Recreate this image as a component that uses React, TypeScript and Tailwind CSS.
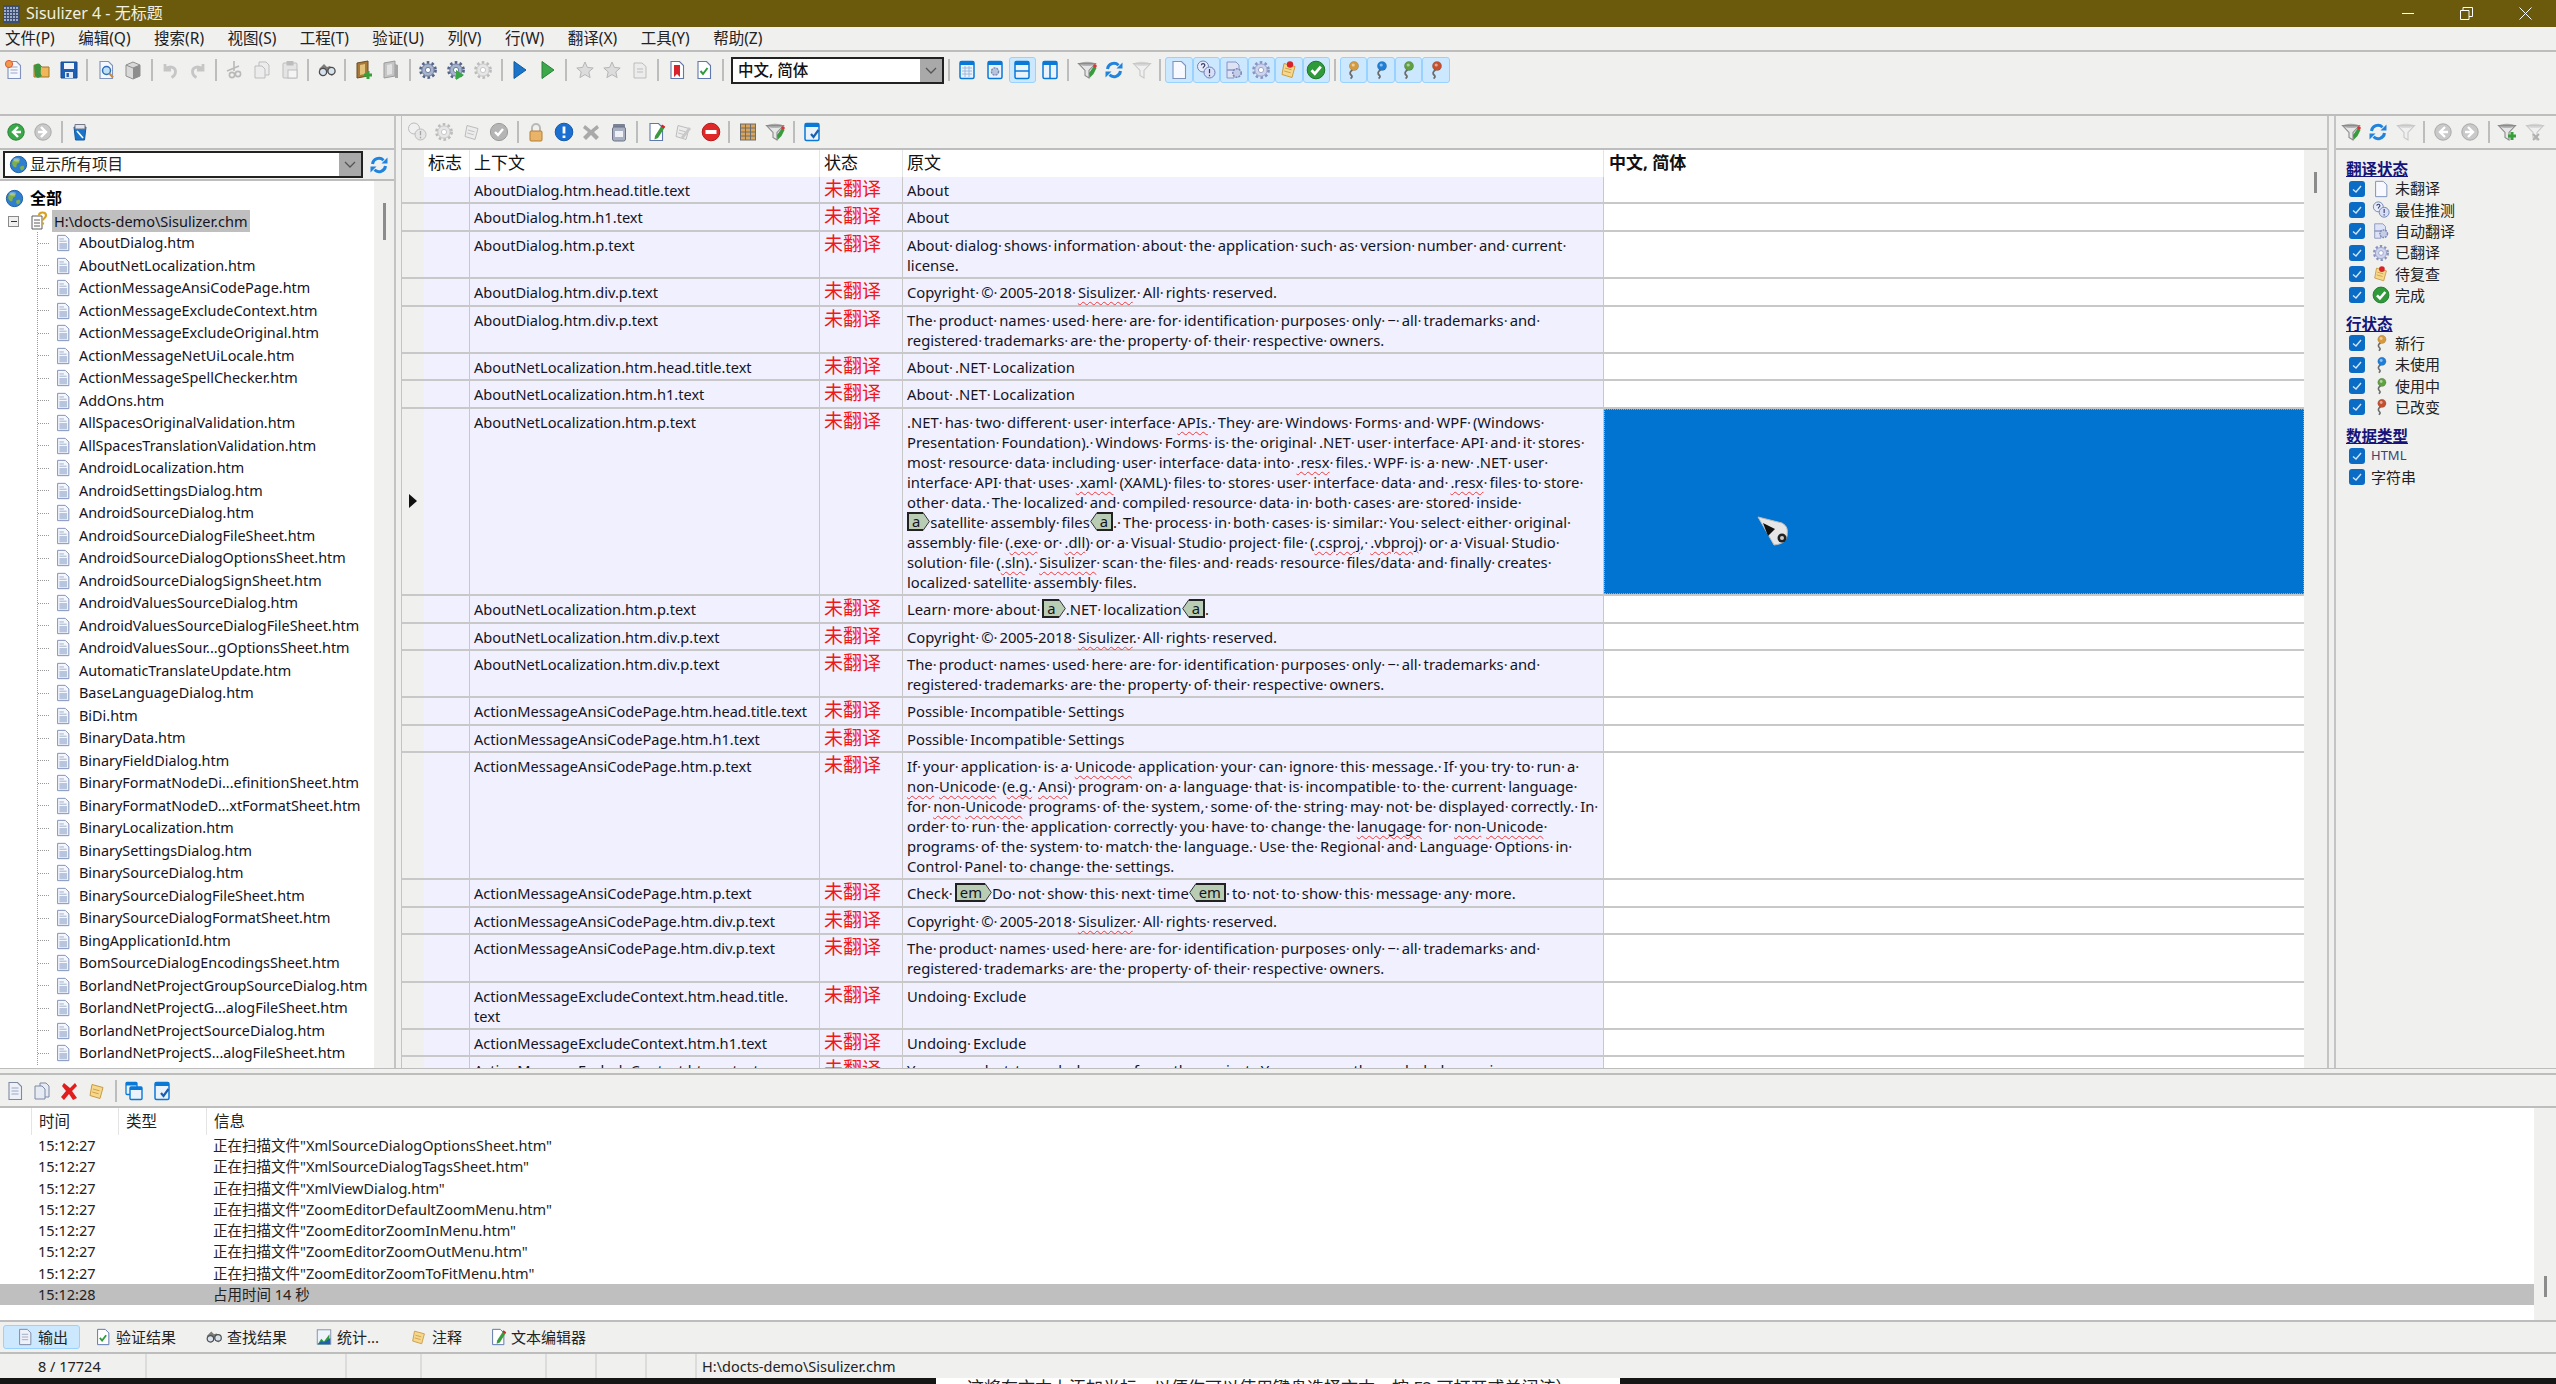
import React from "react";

const Gear = ({ c, d = "#5a6a90" }: { c: string; d?: string }) => (
  <g>
    <circle cx="10" cy="10" r="7.6" fill="none" stroke={d} strokeWidth="2.6" strokeDasharray="2.6 2.3" />
    <circle cx="10" cy="10" r="6.2" fill={c} stroke={d} strokeWidth="0.8" />
    <circle cx="10" cy="10" r="2.6" fill="#fff" stroke={d} strokeWidth="0.8" />
  </g>
);
const Page = ({ f = "#f4f7fd", s = "#7f93bc" }: { f?: string; s?: string }) => (
  <path d="M4 1.5h8.5L16.5 5.5V18.5H4z" fill={f} stroke={s} strokeWidth="1.1" />
);
const Lines = ({ c = "#9aa8c4" }: { c?: string }) => (
  <path d="M6.5 7h7M6.5 10h7M6.5 13h7" stroke={c} strokeWidth="1" />
);
const Win = ({ children }: { children?: React.ReactNode }) => (
  <g>
    <rect x="3" y="1.5" width="14" height="17" rx="1.5" fill="#eaf3fc" stroke="#0a78d7" strokeWidth="1.5" />
    <rect x="3" y="1.5" width="14" height="3.5" fill="#0a78d7" />
    {children}
  </g>
);
const Funnel = ({ c = "#8b8b8b", l = "#e6e6e6" }: { c?: string; l?: string }) => (
  <g>
    <path d="M1.5 3.5h17l-6.5 7v7.5l-4-2.5v-5z" fill={l} stroke={c} strokeWidth="1.1" />
    <ellipse cx="10" cy="3.8" rx="8.4" ry="2" fill={c} opacity="0.7" />
  </g>
);
const Refresh = () => (
  <g fill="none" stroke="#2183dc" strokeWidth="3">
    <path d="M3.5 9a6.5 6.5 0 0 1 11-3.8" />
    <path d="M16.5 11a6.5 6.5 0 0 1-11 3.8" />
    <path d="M12.5 8.5h6V2.5z" fill="#2183dc" stroke="none" />
    <path d="M7.5 11.5h-6v6z" fill="#2183dc" stroke="none" />
  </g>
);
const Key = ({ c }: { c: string }) => (
  <g>
    <path d="M9.5 10c-3 1.5-3 4-1 5.5 1 1 .5 2-1 3" fill="none" stroke="#6b6b6b" strokeWidth="1.8" />
    <circle cx="11" cy="6" r="4.6" fill={c} stroke="#00000040" strokeWidth="0.6" />
    <circle cx="10.2" cy="5" r="1.6" fill="#ffffff80" />
  </g>
);
const Circle = ({ c, s }: { c: string; s: string }) => <circle cx="10" cy="10" r="8.2" fill={c} stroke={s} strokeWidth="1" />;
const Arrow = ({ left, c = "#fff" }: { left?: boolean; c?: string }) => (
  <path d={left ? "M12 5l-5 5 5 5M7 10h8" : "M8 5l5 5-5 5M13 10H5"} fill="none" stroke={c} strokeWidth="2.4" />
);
const Star = () => <path d="M10 2l2.4 5.4 5.8.6-4.4 3.9 1.3 5.7-5.1-3-5.1 3 1.3-5.7-4.4-3.9 5.8-.6z" fill="#dcdcdc" stroke="#b6b6b6" />;
const Note = ({ f = "#f6d88c", s = "#c99a45" }: { f?: string; s?: string }) => (
  <g>
    <path d="M5 3.5l11 3-3 11-10-3z" fill={f} stroke={s} />
    <path d="M6 8l6.5 1.8M5.2 11l6.5 1.8" stroke={s} strokeWidth="0.9" />
  </g>
);
const Globe = () => (
  <g>
    <circle cx="10" cy="10" r="8.6" fill="#2f7fd0" stroke="#1d5ea4" />
    <path d="M5 5c3-2 6 0 6 2s-3 1-3 4-3 2-4 0-1-4 1-6zM12 12c2-1 4-1 4 1s-2 4-3 3-2-3-1-4z" fill="#7fae4a" />
    <ellipse cx="8" cy="5" rx="3.5" ry="2" fill="#ffffff50" />
  </g>
);
const GrayDoc = () => (
  <g>
    <path d="M4 3h8l4 3.5V18H4z" fill="#ececec" stroke="#bdbdbd" />
    <path d="M7 9h6M7 12h6" stroke="#bdbdbd" />
  </g>
);

const shapes: Record<string, React.ReactNode> = {
  globe: <Globe />,
  doc: <g><Page f="#f7f9fe" /></g>,
  file: <g><Page /><rect x="6" y="10" width="8.5" height="7" fill="#b7c5de" /><path d="M6 5.5h5M6 8h8" stroke="#9aa8c4" /></g>,
  newdoc: <g><Page /><Lines /><circle cx="5" cy="4" r="3.6" fill="#ee9b4a" stroke="#e2543a" /></g>,
  open: <g><path d="M3 5h6l2 2h7v10H3z" fill="#f0b659" stroke="#a37524" /><path d="M3 6c3-4 7-3 7 1s-1 6 1 9l-4 2-3-2z" fill="#3d9440" /></g>,
  save: <g><path d="M2 2h16v16H2z" fill="#1c5fb4" stroke="#164c92" /><rect x="5" y="3" width="10" height="6" fill="#f1f5fb" /><rect x="6" y="12" width="8" height="6" fill="#dfe8f5" /><rect x="7.5" y="13" width="2.4" height="4" fill="#1c5fb4" /></g>,
  preview: <g><Page /><circle cx="10.5" cy="10.5" r="4" fill="#bfe0f6" stroke="#2f6fb5" strokeWidth="1.5" /><path d="M13.5 13.5l3.5 4" stroke="#d08a3c" strokeWidth="2.2" /></g>,
  cube: <g><path d="M3 5l7-3 7 3v11l-7 3-7-3z" fill="#d9d9d9" stroke="#8f8f8f" /><path d="M10 8v11l7-3V5z" fill="#8d8d8d" /><path d="M3 5l7 3 7-3" fill="none" stroke="#8f8f8f" /></g>,
  undo: <path d="M5 4v6h6M5.5 9.5c3-4 10-3 10 2 0 3-2 5-4 6" fill="none" stroke="#c6c6c6" strokeWidth="2.8" />,
  redo: <path d="M15 4v6H9M14.5 9.5c-3-4-10-3-10 2 0 3 2 5 4 6" fill="none" stroke="#c6c6c6" strokeWidth="2.8" />,
  cut: <g fill="none" stroke="#b9b9b9" strokeWidth="1.6"><path d="M9 1v10M14 6L2 11" /><circle cx="13" cy="14" r="2.6" /><circle cx="7" cy="15" r="2.6" /></g>,
  copy: <g fill="#ececec" stroke="#bdbdbd"><path d="M7 2h7l3 3v10H7z" /><path d="M3 6h7l3 3v9H3z" /></g>,
  paste: <g fill="#e4e4e4" stroke="#bdbdbd"><rect x="3" y="3" width="14" height="15" rx="1" /><rect x="7" y="1.5" width="6" height="3.5" fill="#bcbcbc" /><rect x="8" y="10" width="9" height="8" fill="#f4f4f4" /></g>,
  binoc: <g><path d="M2 9l5-5 3 3 3-1 5 6-3 4-4-3-1-2-3 5z" fill="#7c7c7c" /><circle cx="6" cy="12" r="3.6" fill="#d8e2ee" stroke="#4c4c4c" strokeWidth="1.3" /><circle cx="14.5" cy="11" r="3.6" fill="#d8e2ee" stroke="#4c4c4c" strokeWidth="1.3" /></g>,
  bookplus: <g><path d="M3 3l11-2v15L3 18z" fill="#a9793a" stroke="#6f4d1e" /><path d="M6 5l5-1v10l-5 1z" fill="#e2c27a" /><path d="M14 11v8M10 15h8" stroke="#37a03c" strokeWidth="3" /></g>,
  bookgray: <g><path d="M3 3l11-2v15L3 18z" fill="#c5c5c5" stroke="#9b9b9b" /><path d="M6 5l5-1v10l-5 1z" fill="#e2e2e2" /><path d="M14 4l3 1v13l-3 0z" fill="#a5a5a5" /></g>,
  gear1: <Gear c="#a7b4ce" d="#55658a" />,
  gear2: <g><Gear c="#a7b4ce" d="#55658a" /><path d="M10 10l8 5-8 5z" fill="#3aa648" /></g>,
  gear3: <Gear c="#e6e6e6" d="#bcbcbc" />,
  gearL: <Gear c="#cdd4ec" d="#8a94c0" />,
  playb: <path d="M4 1.5L16 10 4 18.5z" fill="#1a74c8" stroke="#0f5aa3" />,
  playg: <path d="M4 1.5L16 10 4 18.5z" fill="#3ba84a" stroke="#2a8238" />,
  star: <Star />,
  gdoc: <GrayDoc />,
  bookmark: <g><Page f="#fff" s="#5f78ad" /><path d="M7 5h6v12l-3-3-3 3z" fill="#d8232a" /></g>,
  check: <g><Page f="#fff" s="#5f78ad" /><path d="M6.5 11l2.5 3 4.5-6" fill="none" stroke="#2f9a3a" strokeWidth="2" /></g>,
  wtable: <Win><path d="M5 8h10M5 11h10M5 14h10M8 6v11M12 6v11" stroke="#9ab4d6" strokeWidth="0.9" /></Win>,
  wgear: <Win><circle cx="10" cy="11.5" r="3.6" fill="#b8c4dc" stroke="#7789ad" strokeWidth="1.4" strokeDasharray="2 1" /></Win>,
  wh: <Win><path d="M3 11h14" stroke="#0a78d7" strokeWidth="1.5" /></Win>,
  wv: <Win><path d="M10 5v13" stroke="#0a78d7" strokeWidth="1.5" /></Win>,
  wcheck: <Win><path d="M9 12l2.5 3 5-7" fill="none" stroke="#1a5fb0" strokeWidth="2.2" /></Win>,
  wcopy: <g><rect x="2" y="1.5" width="11" height="12" rx="1" fill="#eaf3fc" stroke="#0a78d7" strokeWidth="1.3" /><rect x="2" y="1.5" width="11" height="3" fill="#0a78d7" /><rect x="6" y="6" width="12" height="12.5" rx="1" fill="#eaf3fc" stroke="#0a78d7" strokeWidth="1.4" /><rect x="6" y="6" width="12" height="3" fill="#0a78d7" /></g>,
  funnelg: <Funnel c="#c8c8c8" l="#f0f0f0" />,
  funnelp: <g><Funnel /><path d="M15 10v8M11 14h8" stroke="#37a03c" strokeWidth="3" /></g>,
  funnelx: <g><Funnel c="#c8c8c8" l="#f0f0f0" /><path d="M8 12l6 6M14 12l-6 6" stroke="#b0b0b0" strokeWidth="2" /></g>,
  refresh: <Refresh />,
  best: <g><circle cx="7" cy="6.5" r="5.5" fill="#e8ecfa" stroke="#6d7fb5" /><circle cx="13.5" cy="12.5" r="5.5" fill="#d7def5" stroke="#6d7fb5" /><path d="M5.4 5.2c0-2.2 3.4-2.2 3.4 0 0 1.4-1.7 1.4-1.7 3M13.5 9v4.2M13.5 14.8v1.4" fill="none" stroke="#333a66" strokeWidth="1.2" /></g>,
  bestg: <g><circle cx="7" cy="6.5" r="5.5" fill="#f0f0f0" stroke="#bcbcbc" /><circle cx="13.5" cy="12.5" r="5.5" fill="#e6e6e6" stroke="#bcbcbc" /><path d="M13.5 9v4.2M13.5 14.8v1.4" stroke="#a5a5a5" strokeWidth="1.3" /></g>,
  auto: <g><path d="M3 2h9l3 3v5H3z M3 10h7v8H3z" fill="#dde3f5" stroke="#8a94c0" /><circle cx="13" cy="13" r="4.2" fill="#c4cde8" stroke="#7d88b8" strokeWidth="1.6" strokeDasharray="2 1" /></g>,
  check2: <g><circle cx="10" cy="10" r="8.6" fill="#b5b5b5" stroke="#9a9a9a" /><path d="M6 10l3 3 5-6" fill="none" stroke="#fff" strokeWidth="2.4" /></g>,
  review: <g><Note /><circle cx="11" cy="4.5" r="3.2" fill="#d8232a" /></g>,
  reviewg: <g><Note f="#ececec" s="#bcbcbc" /></g>,
  note: <g><Note /></g>,
  done: <g><circle cx="10" cy="10" r="8.8" fill="#2f9a3a" stroke="#1f7529" /><path d="M5.5 10.3l3.3 3.4 6-7" fill="none" stroke="#fff" strokeWidth="2.8" /></g>,
  ko: <Key c="#d69a3d" />,
  kb: <Key c="#1f7fd8" />,
  kg: <Key c="#5fa040" />,
  kr: <Key c="#c5502e" />,
  back: <g><Circle c="#3aa848" s="#2a8238" /><Arrow left /></g>,
  fwd: <g><Circle c="#c9c9c9" s="#a9a9a9" /><Arrow /></g>,
  backg: <g><Circle c="#c9c9c9" s="#a9a9a9" /><Arrow left /></g>,
  bucket: <g><path d="M4 5h12l-1.5 13h-9z" fill="#1a74c8" stroke="#125aa0" /><path d="M5 2.5h10V7H5z" fill="#dfe6ee" stroke="#778" /><path d="M7 9l6 7" stroke="#fff" strokeWidth="1.6" /></g>,
  lock: <g><path d="M6 9V6a4 4 0 0 1 8 0v3" fill="none" stroke="#b9b9b9" strokeWidth="2" /><rect x="4" y="9" width="12" height="10" rx="1" fill="#e9b469" stroke="#b57f33" /></g>,
  info: <g><circle cx="10" cy="10" r="8.8" fill="#1a6fd0" stroke="#1559a8" /><path d="M10 4.5v7M10 13.5v2.5" stroke="#fff" strokeWidth="2.8" /></g>,
  xg: <path d="M4 3l6 5 6-5 2 3-5 4 5 5-3 3-5-5-5 5-3-3 5-5-5-4z" fill="#a9a9a9" />,
  jar: <g><rect x="4" y="2" width="12" height="3.5" rx="1" fill="#7a8296" /><rect x="3.5" y="5" width="13" height="14" rx="2" fill="#a8afc0" stroke="#6b7388" /><rect x="6" y="9" width="8" height="6" fill="#eef1f7" /></g>,
  pen: <g><Page f="#fff" s="#5f78ad" /><path d="M9 14l7-11 3 2-7 11-3.5 1.5z" fill="#3a9a3e" /><path d="M15.5 3.5l3 2" stroke="#d8232a" strokeWidth="2.2" /></g>,
  peng: <g><Note f="#ececec" s="#bcbcbc" /><path d="M8 15l8-10 2 2-8 10z" fill="#c8c8c8" /></g>,
  stop: <g><circle cx="10" cy="10" r="8.8" fill="#e02828" stroke="#b51a1a" /><rect x="4.5" y="8" width="11" height="4" fill="#fff" /></g>,
  cols: <g><rect x="2.5" y="2" width="15" height="16" fill="#d9a55c" stroke="#6d6d6d" /><path d="M7.5 2v16M12.5 2v16M2.5 6h15M2.5 10h15M2.5 14h15" stroke="#6d6d6d" /></g>,
  funnelr: <g><Funnel /><path d="M17 6l-5 7 .5 5 4-4 3-6z" fill="#3a9a3e" /><circle cx="18" cy="6" r="1.8" fill="#d33" /></g>,
  logdoc: <g><Page f="#eef1f8" s="#7d8aa5" /><Lines /></g>,
  logcopy: <g fill="#e6eaf3" stroke="#7d8aa5"><path d="M8 2h6l3 3v11H8z" /><path d="M3 5h7l3 3v10H3z" /></g>,
  redx: <path d="M4 2l6 5 5-5 2 3-5 5 5 7-4 2-4-6-5 6-3-3 5-6-4-5z" fill="#df1e1e" />,
  chart: <g><rect x="2.5" y="2" width="15" height="16" fill="#eef3fa" stroke="#7d8aa5" /><path d="M3 18l4-6 3 3 6-8v11z" fill="#2f9a3a" /><path d="M3 18l4-3 3 1 7-5v7z" fill="#1c5fb4" /></g>,
  project: <g><path d="M3 5h10v13H3z" fill="#fff" stroke="#5c5c5c" /><path d="M5 9h6M5 12h6M5 15h6" stroke="#5c5c5c" /><path d="M10 4.5c0-4 7-4 7 0 0 2.5-3 2.5-3 5M14 11.5v2" fill="none" stroke="#d9a21e" strokeWidth="2.2" /></g>,
};

const Ico = ({ k, s = 20 }: { k: string; s?: number }) => (
  <svg width={s} height={s} viewBox="0 0 20 20" className="shrink-0">
    {shapes[k]}
  </svg>
);

const Bar = ({ items }: { items: string[] }) => (
  <>
    {items.map((it, i) =>
      it === "|" ? (
        <div key={i} className="w-[9.5px] h-[26px] flex justify-center shrink-0">
          <div className="w-[2px] h-[22px] mt-[2px] bg-[#bdbdbd]" />
        </div>
      ) : it[0] === "!" ? (
        <div key={i} className="w-[27.5px] h-[26px] flex items-center justify-center shrink-0 bg-[#cce8ff] border border-[#99d1ff] rounded-[3px]">
          <Ico k={it.slice(1)} />
        </div>
      ) : (
        <div key={i} className="w-[27.5px] h-[26px] flex items-center justify-center shrink-0">
          <Ico k={it} />
        </div>
      )
    )}
  </>
);

const Chevron = () => (
  <svg width="12" height="8" viewBox="0 0 12 8">
    <path d="M1 1l5 5 5-5" fill="none" stroke="#555" strokeWidth="1.3" />
  </svg>
);

const menus = ["文件(P)", "编辑(Q)", "搜索(R)", "视图(S)", "工程(T)", "验证(U)", "列(V)", "行(W)", "翻译(X)", "工具(Y)", "帮助(Z)"];

const tree = [
  "AboutDialog.htm", "AboutNetLocalization.htm", "ActionMessageAnsiCodePage.htm", "ActionMessageExcludeContext.htm", "ActionMessageExcludeOriginal.htm",
  "ActionMessageNetUiLocale.htm", "ActionMessageSpellChecker.htm", "AddOns.htm", "AllSpacesOriginalValidation.htm", "AllSpacesTranslationValidation.htm",
  "AndroidLocalization.htm", "AndroidSettingsDialog.htm", "AndroidSourceDialog.htm", "AndroidSourceDialogFileSheet.htm", "AndroidSourceDialogOptionsSheet.htm",
  "AndroidSourceDialogSignSheet.htm", "AndroidValuesSourceDialog.htm", "AndroidValuesSourceDialogFileSheet.htm", "AndroidValuesSour...gOptionsSheet.htm",
  "AutomaticTranslateUpdate.htm", "BaseLanguageDialog.htm", "BiDi.htm", "BinaryData.htm", "BinaryFieldDialog.htm", "BinaryFormatNodeDi...efinitionSheet.htm",
  "BinaryFormatNodeD...xtFormatSheet.htm", "BinaryLocalization.htm", "BinarySettingsDialog.htm", "BinarySourceDialog.htm", "BinarySourceDialogFileSheet.htm",
  "BinarySourceDialogFormatSheet.htm", "BingApplicationId.htm", "BomSourceDialogEncodingsSheet.htm", "BorlandNetProjectGroupSourceDialog.htm",
  "BorlandNetProjectG...alogFileSheet.htm", "BorlandNetProjectSourceDialog.htm", "BorlandNetProjectS...alogFileSheet.htm",
];

const copyright = ["Copyright © 2005-2018 ~Sisulizer~. All rights reserved."];
const names = [
  "The product names used here are for identification purposes only − all trademarks and ",
  "registered trademarks are the property of their respective owners.",
];

const rows: { ctx: string[]; src: string[]; sel?: boolean }[] = [
  { ctx: ["AboutDialog.htm.head.title.text"], src: ["About"] },
  { ctx: ["AboutDialog.htm.h1.text"], src: ["About"] },
  { ctx: ["AboutDialog.htm.p.text"], src: ["About dialog shows information about the application such as version number and current ", "license."] },
  { ctx: ["AboutDialog.htm.div.p.text"], src: copyright },
  { ctx: ["AboutDialog.htm.div.p.text"], src: names },
  { ctx: ["AboutNetLocalization.htm.head.title.text"], src: ["About .NET Localization"] },
  { ctx: ["AboutNetLocalization.htm.h1.text"], src: ["About .NET Localization"] },
  {
    ctx: ["AboutNetLocalization.htm.p.text"],
    sel: true,
    src: [
      ".NET has two different user interface ~APIs~. They are Windows Forms and WPF (Windows ",
      "Presentation Foundation). Windows Forms is the original .NET user interface API and it stores ",
      "most resource data including user interface data into ~.resx~ files. WPF is a new .NET user ",
      "interface API that uses ~.xaml~ (XAML) files to stores user interface data and ~.resx~ files to store ",
      "other data. The localized and compiled resource data in both cases are stored inside ",
      "[a>satellite assembly files<a]. The process in both cases is similar: You select either original ",
      "assembly file (~.exe~ or ~.dll~) or a Visual Studio project file (~.csproj~, ~.vbproj~) or a Visual Studio ",
      "solution file (~.sln~). ~Sisulizer~ scan the files and reads resource files/data and finally creates ",
      "localized satellite assembly files.",
    ],
  },
  { ctx: ["AboutNetLocalization.htm.p.text"], src: ["Learn more about [a>.NET localization<a]."] },
  { ctx: ["AboutNetLocalization.htm.div.p.text"], src: copyright },
  { ctx: ["AboutNetLocalization.htm.div.p.text"], src: names },
  { ctx: ["ActionMessageAnsiCodePage.htm.head.title.text"], src: ["Possible Incompatible Settings"] },
  { ctx: ["ActionMessageAnsiCodePage.htm.h1.text"], src: ["Possible Incompatible Settings"] },
  {
    ctx: ["ActionMessageAnsiCodePage.htm.p.text"],
    src: [
      "If your application is a ~Unicode~ application your can ignore this message. If you try to run a ",
      "~non~-~Unicode~ (~e.g.~ ~Ansi~) program on a language that is incompatible to the current language ",
      "for ~non~-~Unicode~ programs of the system, some of the string may not be displayed correctly. In ",
      "order to run the application correctly you have to change the ~lanugage~ for ~non~-~Unicode~ ",
      "programs of the system to match the language. Use the Regional and Language Options in ",
      "Control Panel to change the settings.",
    ],
  },
  { ctx: ["ActionMessageAnsiCodePage.htm.p.text"], src: ["Check [em>Do not show this next time<em] to not to show this message any more."] },
  { ctx: ["ActionMessageAnsiCodePage.htm.div.p.text"], src: copyright },
  { ctx: ["ActionMessageAnsiCodePage.htm.div.p.text"], src: names },
  { ctx: ["ActionMessageExcludeContext.htm.head.title.", "text"], src: ["Undoing Exclude"] },
  { ctx: ["ActionMessageExcludeContext.htm.h1.text"], src: ["Undoing Exclude"] },
  { ctx: ["ActionMessageExcludeContext.htm.p.text"], src: ["You can select to exclude rows from the project. You can use the excluded rows in"] },
];

const Tag = ({ t, open }: { t: string; open: boolean }) => (
  <span className="inline-flex h-[19px] align-top leading-[15px]">
    {!open && (
      <svg width="7" height="19" viewBox="0 0 7 19" className="shrink-0">
        <path d="M7 .5L.7 9.5 7 18.5" fill="#b9cdb5" stroke="#333" />
      </svg>
    )}
    <span className={open ? "bg-[#b9cdb5] border-y-2 border-l-2 border-[#222] px-[3px]" : "bg-[#b9cdb5] border-y-2 border-r-2 border-[#222] px-[3px]"}>{t}</span>
    {open && (
      <svg width="7" height="19" viewBox="0 0 7 19" className="shrink-0">
        <path d="M0 .5L6.3 9.5 0 18.5" fill="#b9cdb5" stroke="#333" />
      </svg>
    )}
  </span>
);

const Plain = ({ s }: { s: string }) => (
  <>
    {s.split(" ").map((w, i) => (
      <React.Fragment key={i}>
        {i > 0 && <span className="tracking-[2px] text-[#333]">·</span>}
        {w}
      </React.Fragment>
    ))}
  </>
);

const Src = ({ s }: { s: string }) => (
  <div className="h-[20px] whitespace-nowrap text-[14.8px]">
    {s.split(/(~[^~]+~|\[\w+>|<\w+\])/).map((p, i) => {
      if (!p) return null;
      if (p[0] === "~")
        return (
          <span key={i} className="underline decoration-wavy decoration-[#ef3b3b] decoration-1 underline-offset-[3px]">
            {p.slice(1, -1)}
          </span>
        );
      if (p[0] === "[") return <Tag key={i} t={p.slice(1, -1)} open />;
      if (p[0] === "<") return <Tag key={i} t={p.slice(1, -1)} open={false} />;
      return <Plain key={i} s={p} />;
    })}
  </div>
);

const Check = () => (
  <span className="w-[16px] h-[16px] rounded-[3px] bg-[#0a6cc4] flex items-center justify-center shrink-0">
    <svg width="10" height="10" viewBox="0 0 10 10">
      <path d="M1 5.5L4 8l5-6" fill="none" stroke="#cfe6fa" strokeWidth="1.4" />
    </svg>
  </span>
);

const FilterRow = ({ icon, t }: { icon: string; t: string }) => (
  <div className="flex items-center h-[21.3px] ml-[3px]">
    <Check />
    <span className="ml-[7px]">
      <Ico k={icon} s={18} />
    </span>
    <span className="ml-[5px] text-[15px] text-[#222]">{t}</span>
  </div>
);

const DataRow = ({ t, small }: { t: string; small?: boolean }) => (
  <div className="flex items-center h-[21.3px] ml-[3px]">
    <Check />
    <span className={small ? "ml-[6px] text-[13px] text-[#3a4470]" : "ml-[6px] text-[15px] text-[#222]"}>{t}</span>
  </div>
);

const Head = ({ t }: { t: string }) => (
  <div className="h-[17px] leading-[17px] text-[15.5px] font-bold text-[#14147a] underline">{t}</div>
);

const logs = ["XmlSourceDialogOptionsSheet.htm", "XmlSourceDialogTagsSheet.htm", "XmlViewDialog.htm", "ZoomEditorDefaultZoomMenu.htm", "ZoomEditorZoomInMenu.htm", "ZoomEditorZoomOutMenu.htm", "ZoomEditorZoomToFitMenu.htm"];

const tabs = [
  { i: "logdoc", t: "输出", c: "ml-[3px] w-[77px] bg-[#cce8ff] border border-[#99d1ff] rounded-[3px] pl-[12px]" },
  { i: "check", t: "验证结果", c: "ml-[8px] w-[97px] pl-[6px]" },
  { i: "binoc", t: "查找结果", c: "ml-[14px] w-[96px] pl-[6px]" },
  { i: "chart", t: "统计...", c: "ml-[14px] w-[80px] pl-[6px]" },
  { i: "note", t: "注释", c: "ml-[15px] w-[66px] pl-[6px]" },
  { i: "pen", t: "文本编辑器", c: "ml-[13px] w-[111px] pl-[6px]" },
];

const statusCells = ["w-[147px]", "w-[200px]", "w-[75px]", "w-[125px]", "w-[50px]", "w-[50px]", "w-[50px]"];

export default function App() {
  return (
    <div className="w-[2556px] h-[1384px] overflow-hidden flex flex-col bg-[#f0f0ee] text-[#14141f] font-['Noto_Sans','Noto_Sans_CJK_SC',sans-serif]">
      {/* title bar */}
      <div className="h-[27px] shrink-0 bg-[#6b5a0c] flex items-center text-white">
        <svg width="20" height="20" viewBox="0 0 20 20" className="ml-[2px] shrink-0">
          <rect x="1" y="1" width="17" height="18" fill="#3c4e72" />
          <path d="M3 3v14M6 3v14M9 3v14M12 3v14M15 3v14" stroke="#c8d4ea" strokeWidth="1.4" strokeDasharray="2 1" />
        </svg>
        <span className="ml-[4px] text-[16px] leading-[27px] text-[#f2f0e4]">Sisulizer 4 - 无标题</span>
        <div className="ml-auto flex items-center">
          <div className="w-[12px] h-[1px] bg-white" />
          <svg width="13" height="13" viewBox="0 0 13 13" className="ml-[46px]">
            <path d="M.5 3.5h8.5v9H.5zM3 3.5V.5h9.5v9H9" fill="none" stroke="#fff" />
          </svg>
          <svg width="13" height="13" viewBox="0 0 13 13" className="ml-[46px] mr-[24px]">
            <path d="M.5.5l12 12M12.5.5l-12 12" stroke="#fff" />
          </svg>
        </div>
      </div>

      {/* menu */}
      <div className="h-[25px] shrink-0 flex items-center gap-[23.5px] pl-[5px] border-b-2 border-[#bdbdbd] text-[15.5px] text-[#222]">
        {menus.map((m) => (
          <span key={m}>{m}</span>
        ))}
      </div>

      {/* main toolbar */}
      <div className="h-[64px] shrink-0 flex items-start pt-[5px] border-b-2 border-[#bdbdbd]">
        <Bar items={["newdoc", "open", "save", "|", "preview", "cube", "|", "undo", "redo", "|", "cut", "copy", "paste", "|", "binoc", "|", "bookplus", "bookgray", "|", "gear1", "gear2", "gear3", "|", "playb", "playg", "|", "star", "star", "gdoc", "|", "bookmark", "check", "|"]} />
        <div className="ml-[3.5px] w-[213px] h-[27px] border-2 border-[#222] bg-white flex items-center justify-between shrink-0">
          <span className="pl-[5px] text-[15.5px] font-medium text-[#111]">中文, 简体</span>
          <span className="w-[22px] h-full bg-[#a9a9a9] flex items-center justify-center">
            <Chevron />
          </span>
        </div>
        <Bar items={["|", "wtable", "wgear", "!wh", "wv", "|", "funnelr", "refresh", "funnelg", "|", "!doc", "!best", "!auto", "!gearL", "!review", "!done", "|", "!ko", "!kb", "!kg", "!kr"]} />
      </div>

      {/* panels */}
      <div className="h-[953px] shrink-0 flex gap-[5px] border-b border-[#bdbdbd] overflow-hidden">
        {/* left panel */}
        <div className="w-[396px] shrink-0 flex flex-col border-r-2 border-[#c4c4c4]">
          <div className="h-[34px] shrink-0 flex items-center pl-[2px] border-b-2 border-[#bdbdbd]">
            <Bar items={["back", "fwd", "|", "bucket"]} />
          </div>
          <div className="h-[31px] shrink-0 flex items-center pl-[3px] border-b-2 border-[#bdbdbd]">
            <div className="w-[360px] h-[27px] border-2 border-[#222] bg-white flex items-center shrink-0">
              <span className="ml-[4px]">
                <Ico k="globe" s={19} />
              </span>
              <span className="ml-[2px] text-[15.5px] text-[#222]">显示所有项目</span>
              <span className="ml-auto w-[22px] h-full bg-[#a9a9a9] flex items-center justify-center">
                <Chevron />
              </span>
            </div>
            <span className="ml-[6px]">
              <Ico k="refresh" s={20} />
            </span>
          </div>
          <div className="flex-1 min-h-0 flex overflow-hidden">
            <div className="w-[374px] bg-white shrink-0 overflow-hidden">
              <div className="h-[26px] flex items-center pl-[5px] mt-[4px]">
                <Ico k="globe" s={19} />
                <span className="ml-[6px] text-[16px] font-bold text-black">全部</span>
              </div>
              <div className="h-[22px] -mt-[1px] flex items-center pl-[8px]">
                <span className="w-[11px] h-[11px] border border-[#8a8a8a] bg-[#f0f0f0] flex items-center justify-center shrink-0">
                  <span className="w-[6px] h-[1px] bg-[#333]" />
                </span>
                <span className="ml-[10px]">
                  <Ico k="project" s={20} />
                </span>
                <span className="ml-[3px] pl-[2px] h-[22px] w-[198px] bg-[#bfbfbf] text-[14.5px] leading-[22px] whitespace-nowrap">H:\docts-demo\Sisulizer.chm</span>
              </div>
              <div className="ml-[37px] border-l border-dotted border-[#999]">
                {tree.map((t) => (
                  <div key={t} className="h-[22.5px] flex items-center">
                    <span className="w-[11px] border-b border-dotted border-[#999] shrink-0" />
                    <span className="ml-[5px]">
                      <Ico k="file" s={18} />
                    </span>
                    <span className="ml-[7px] text-[14.4px] whitespace-nowrap">{t}</span>
                  </div>
                ))}
              </div>
            </div>
            <div className="flex-1 flex justify-center">
              <div className="w-[3px] h-[37px] mt-[22px] bg-[#8c8c8c]" />
            </div>
          </div>
        </div>

        {/* middle panel */}
        <div className="w-[1928px] shrink-0 flex flex-col border-l border-r-2 border-[#c4c4c4]">
          <div className="h-[34px] shrink-0 flex items-center pl-[1px] border-b-2 border-[#bdbdbd]">
            <Bar items={["bestg", "gear3", "reviewg", "check2", "|", "lock", "info", "xg", "jar", "|", "pen", "peng", "stop", "|", "cols", "funnelr", "|", "wcheck"]} />
          </div>
          <div className="flex-1 min-h-0 flex overflow-hidden">
            <div className="w-[1902px] shrink-0 flex flex-col overflow-hidden">
              <div className="h-[27px] shrink-0 flex bg-white text-[17px] leading-[25px] text-[#111]">
                <div className="w-[22px] bg-[#f0f0ee] shrink-0" />
                <div className="w-[46px] pl-[4px] shrink-0 border-r border-[#e4e4e4]">标志</div>
                <div className="w-[350px] pl-[4px] shrink-0 border-r border-[#e4e4e4]">上下文</div>
                <div className="w-[83px] pl-[4px] shrink-0 border-r border-[#e4e4e4]">状态</div>
                <div className="w-[701px] pl-[4px] shrink-0 border-r border-[#e4e4e4]">原文</div>
                <div className="flex-1 pl-[5px] font-bold">中文, 简体</div>
              </div>
              {rows.map((r, i) => (
                <div key={i} className="flex shrink-0 border-b-2 border-[#c8c8c8] text-[14.6px] leading-[20px]">
                  <div className="w-[22px] shrink-0 bg-[#f0f0ee] flex items-center justify-center">
                    {r.sel && (
                      <svg width="8" height="14" viewBox="0 0 8 14">
                        <path d="M0 0l8 7-8 7z" fill="#111" />
                      </svg>
                    )}
                  </div>
                  <div className="w-[46px] shrink-0 bg-[#f0f0ff] border-r border-[#c8c8c8]" />
                  <div className="w-[350px] shrink-0 bg-[#f0f0ff] border-r border-[#c8c8c8] pl-[4px] pt-[3px] pb-[2.4px] whitespace-nowrap">
                    {r.ctx.map((c, j) => (
                      <div key={j} className="h-[20px]">{c}</div>
                    ))}
                  </div>
                  <div className="w-[83px] shrink-0 bg-[#f0f0ff] border-r border-[#c8c8c8] pl-[4px] pt-[1px] h-auto text-[19px] leading-[22px] text-[#f01818]">未翻译</div>
                  <div className="w-[701px] shrink-0 bg-[#f0f0ff] border-r border-[#c8c8c8] pl-[4px] pt-[3px] pb-[2.4px]">
                    {r.src.map((s, j) => (
                      <Src key={j} s={s} />
                    ))}
                  </div>
                  {r.sel ? (
                    <div className="relative flex-1 bg-[#0074d0] border border-dotted border-[#c9a060]">
                      <svg width="34" height="30" viewBox="0 0 34 30" className="absolute left-[152px] top-[106px]">
                        <path d="M1 1l24 6c5 3 6 6 5 13-1 5-4 8-13 9z" fill="#e6e6e6" stroke="#bbb" />
                        <path d="M6 7l12 6-7 7z" fill="#111" />
                        <circle cx="25" cy="22" r="4.5" fill="#222" />
                        <circle cx="25" cy="22" r="2" fill="#ccc" />
                      </svg>
                    </div>
                  ) : (
                    <div className="flex-1 bg-white" />
                  )}
                </div>
              ))}
            </div>
            <div className="flex-1 flex justify-center">
              <div className="w-[3px] h-[21px] mt-[22px] bg-[#8c8c8c]" />
            </div>
          </div>
        </div>

        {/* right panel */}
        <div className="flex-1 min-w-0 flex flex-col border-l-2 border-[#c4c4c4]">
          <div className="h-[34px] shrink-0 flex items-center pl-[1px] border-b-2 border-[#bdbdbd]">
            <Bar items={["funnelr", "refresh", "funnelg", "|", "backg", "fwd", "|", "funnelp", "funnelx"]} />
          </div>
          <div className="pl-[10px] pt-[11px]">
            <Head t="翻译状态" />
            <FilterRow icon="doc" t="未翻译" />
            <FilterRow icon="best" t="最佳推测" />
            <FilterRow icon="auto" t="自动翻译" />
            <FilterRow icon="gearL" t="已翻译" />
            <FilterRow icon="review" t="待复查" />
            <FilterRow icon="done" t="完成" />
            <div className="mt-[10px]">
              <Head t="行状态" />
            </div>
            <FilterRow icon="ko" t="新行" />
            <FilterRow icon="kb" t="未使用" />
            <FilterRow icon="kg" t="使用中" />
            <FilterRow icon="kr" t="已改变" />
            <div className="mt-[10px]">
              <Head t="数据类型" />
            </div>
            <DataRow t="HTML" small />
            <DataRow t="字符串" />
          </div>
        </div>
      </div>

      {/* lower pane */}
      <div className="mt-[4px] flex-1 min-h-0 flex flex-col border-t-2 border-[#bdbdbd]">
        <div className="h-[33px] shrink-0 flex items-center pl-[1px] border-b-2 border-[#bdbdbd]">
          <Bar items={["logdoc", "logcopy", "redx", "note", "|", "wcopy", "wcheck"]} />
        </div>
        <div className="flex-1 min-h-0 flex bg-white">
          <div className="w-[2534px] shrink-0 flex flex-col">
            <div className="h-[27px] shrink-0 flex text-[15.5px] leading-[27px] text-[#222]">
              <div className="w-[32px] shrink-0 border-r border-[#e4e4e4]" />
              <div className="w-[87px] pl-[7px] shrink-0 border-r border-[#e4e4e4]">时间</div>
              <div className="w-[88px] pl-[7px] shrink-0 border-r border-[#e4e4e4]">类型</div>
              <div className="pl-[7px]">信息</div>
            </div>
            {logs.map((l) => (
              <div key={l} className="h-[21.3px] shrink-0 flex text-[14.5px] leading-[21.3px] text-[#222]">
                <div className="w-[213px] pl-[38px] shrink-0">15:12:27</div>
                <div className="whitespace-nowrap">正在扫描文件"{l}"</div>
              </div>
            ))}
            <div className="h-[21.3px] shrink-0 flex text-[14.5px] leading-[21.3px] text-[#222] bg-[#bfbfbf]">
              <div className="w-[213px] pl-[38px] shrink-0">15:12:28</div>
              <div>占用时间 14 秒</div>
            </div>
          </div>
          <div className="flex-1 bg-[#f0f0ee] flex justify-center">
            <div className="w-[3px] h-[21px] mt-[168px] bg-[#8c8c8c]" />
          </div>
        </div>
        <div className="h-[34px] shrink-0 flex items-center border-y-2 border-[#bdbdbd] text-[15px] text-[#222]">
          {tabs.map((t) => (
            <div key={t.t} className={"h-[24px] flex items-center gap-[4px] shrink-0 " + t.c}>
              <Ico k={t.i} s={18} />
              <span className="whitespace-nowrap">{t.t}</span>
            </div>
          ))}
        </div>
        <div className="h-[24px] shrink-0 flex text-[14.5px] leading-[24px] text-[#222]">
          {statusCells.map((c, i) => (
            <div key={c + i} className={c + " shrink-0 border-r-2 border-[#dcdcdc] " + (i === 0 ? "pl-[38px]" : "")}>
              {i === 0 ? "8 / 17724" : ""}
            </div>
          ))}
          <div className="pl-[5px] whitespace-nowrap">H:\docts-demo\Sisulizer.chm</div>
        </div>
        <div className="h-[6px] shrink-0 flex overflow-hidden bg-[#161616]">
          <div className="w-[936px] shrink-0" />
          <div className="w-[684px] shrink-0 bg-white pl-[31px] text-[17px] leading-[20px] whitespace-nowrap text-[#222]">这将在文本上添加光标，以便你可以使用键盘选择文本，按 F2 可打开或关闭该）</div>
        </div>
      </div>
    </div>
  );
}
